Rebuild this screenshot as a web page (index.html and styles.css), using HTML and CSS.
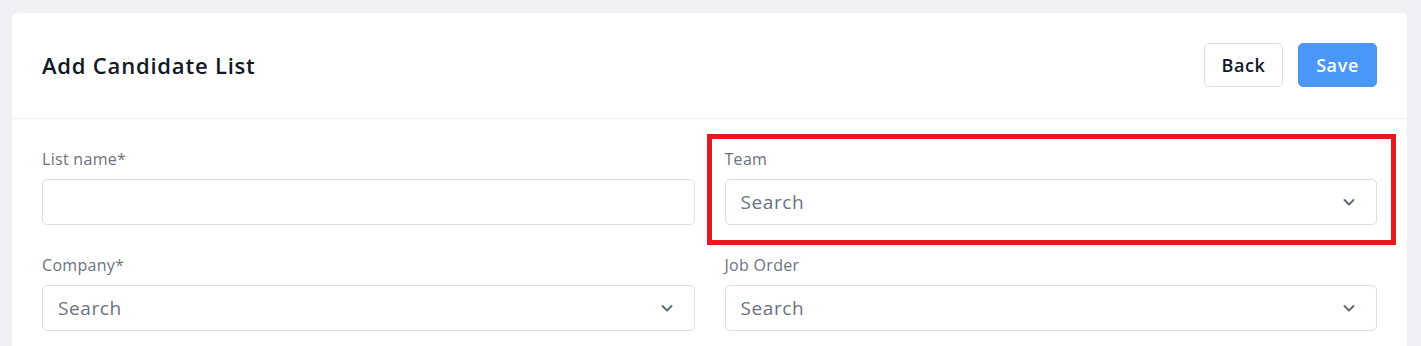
FILE: index.html
```html
<!DOCTYPE html>
<html>
<head>
<meta charset="utf-8">
<link rel="stylesheet" href="styles.css">
</head>
<body>
<div class="card">
  <div class="card-header">
    <h1 class="title">Add Candidate List</h1>
    <div class="actions">
      <button class="btn btn-back">Back</button>
      <button class="btn btn-save">Save</button>
    </div>
  </div>
  <div class="card-body">
    <div class="field">
      <label class="label">List name*</label>
      <div class="input"></div>
    </div>
    <div class="field highlighted">
      <label class="label">Team</label>
      <div class="input select"><span class="placeholder">Search</span>
        <svg class="chev" width="14" height="14" viewBox="0 0 14 14"><path d="M2.5 5 L7 9.5 L11.5 5" fill="none" stroke="#5b6b7c" stroke-width="2" stroke-linecap="round" stroke-linejoin="round"/></svg>
      </div>
    </div>
    <div class="field">
      <label class="label">Company*</label>
      <div class="input select"><span class="placeholder">Search</span>
        <svg class="chev" width="14" height="14" viewBox="0 0 14 14"><path d="M2.5 5 L7 9.5 L11.5 5" fill="none" stroke="#5b6b7c" stroke-width="2" stroke-linecap="round" stroke-linejoin="round"/></svg>
      </div>
    </div>
    <div class="field">
      <label class="label">Job Order</label>
      <div class="input select"><span class="placeholder">Search</span>
        <svg class="chev" width="14" height="14" viewBox="0 0 14 14"><path d="M2.5 5 L7 9.5 L11.5 5" fill="none" stroke="#5b6b7c" stroke-width="2" stroke-linecap="round" stroke-linejoin="round"/></svg>
      </div>
    </div>
  </div>
</div>
</body>
</html>
```
FILE: styles.css
```css
* { box-sizing: border-box; }
html, body { margin: 0; padding: 0; }
body {
  background: #eff0f3;
  font-family: "Open Sans", "Noto Sans", sans-serif;
  padding: 13px 14px 0 12px;
  height: 346px;
  overflow: hidden;
}
.card {
  background: #fff;
  border-radius: 5px 5px 0 0;
  min-height: 340px;
}
.card-header {
  height: 106px;
  display: flex;
  align-items: center;
  justify-content: space-between;
  padding: 0 30px 2px 30px;
  border-bottom: 1px solid #eceef1;
}
.title {
  margin: 0;
  font-size: 22px;
  font-weight: 600;
  color: #111827;
  letter-spacing: 0.8px;
}
.actions { display: flex; gap: 15px; }
.btn {
  height: 44px;
  width: 79px;
  border-radius: 5px;
  font-family: inherit;
  font-size: 18px;
  font-weight: 600;
  letter-spacing: 0.6px;
  cursor: pointer;
  padding: 0;
}
.btn-back { background: #fff; border: 1px solid #dcdfe4; color: #111827; }
.btn-save { background: #4a97f8; border: 1px solid #4a97f8; color: #fff; }
.card-body {
  display: grid;
  grid-template-columns: 1fr 1fr;
  column-gap: 30px;
  row-gap: 28px;
  padding: 28px 30px 0 30px;
}
.field { position: relative; display: flex; flex-direction: column; }
.label {
  font-size: 16px;
  color: #6b7280;
  line-height: 24px;
  letter-spacing: 0.3px;
  margin-bottom: 8px;
}
.input {
  height: 46px;
  border: 1px solid #dcdfe5;
  border-radius: 5px;
  background: #fff;
}
.select {
  display: flex;
  align-items: center;
  justify-content: space-between;
  padding: 0 20px 0 15px;
}
.placeholder { font-size: 19px; color: #6b7280; letter-spacing: 0.6px; }
.chev { display: block; }
.highlighted::after {
  content: "";
  position: absolute;
  left: -18px;
  top: -13px;
  right: -19px;
  bottom: -20px;
  border: 5px solid #e31b1f;
  pointer-events: none;
}
```
